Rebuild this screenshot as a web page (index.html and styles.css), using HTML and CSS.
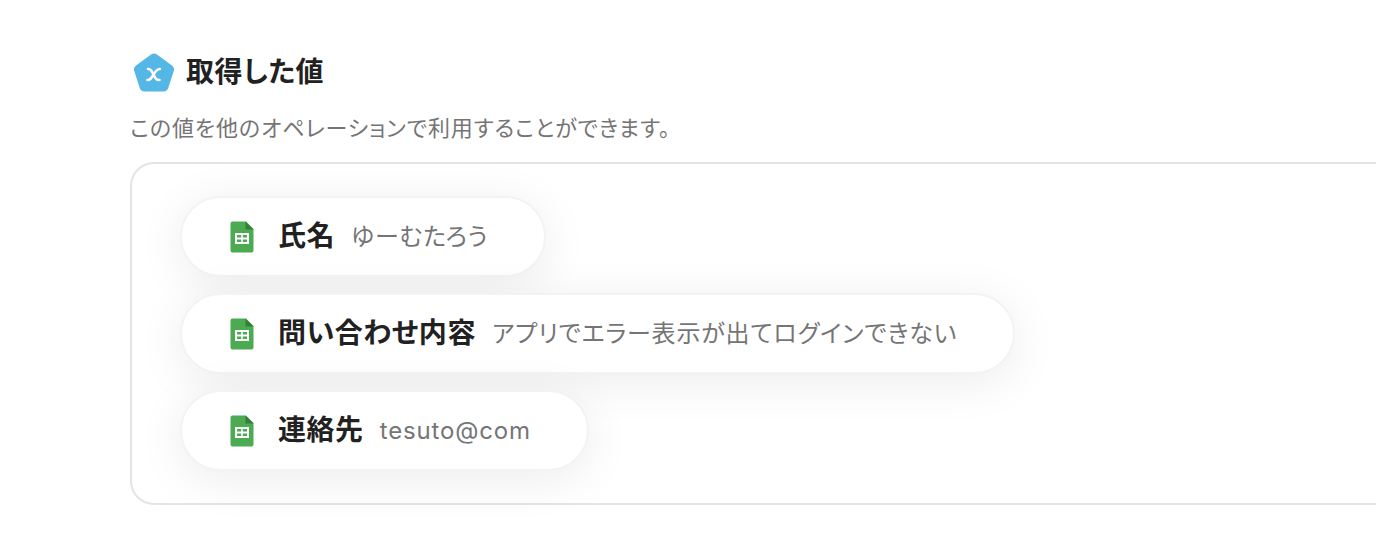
FILE: index.html
```html
<!DOCTYPE html>
<html lang="ja">
<head>
<meta charset="utf-8">
<title>取得した値</title>
<link rel="stylesheet" href="styles.css">
</head>
<body>
<svg class="defs" aria-hidden="true">
<symbol id="sheet" viewBox="0 0 24 32">
<path fill="#4caa53" d="M2 .5H16L23.500 8V29.500a2 2 0 0 1-2 2H2.500a2 2 0 0 1-2-2V2.500a2 2 0 0 1 2-2z"/>
<path fill="#357f3b" d="M15.500.5 23.500 8.500H15.500z"/>
<path fill="#fff" fill-rule="evenodd" d="M5 12h14v11H5zM7 14v2.600h4.200V14zM12.800 14v2.600H17V14zM7 18.400V21h4.200v-2.600zM12.800 18.400V21H17v-2.600z"/>
</symbol>
</svg>
<main class="page">
<header class="heading">
<svg class="logo" viewBox="0 0 40 40" aria-hidden="true">
<path fill="#54b7e6" stroke="#54b7e6" stroke-width="10" stroke-linejoin="round" d="M20 6.500 35 17.500 29.500 34.500H10.500L5 17.500z"/>
<path fill="none" stroke="#fff" stroke-width="2.600" stroke-linecap="round" d="M14 17c2.800 0 3.600 1.600 5.500 5.500s3 5.800 6 5.500M25.800 17c-2.800 0-4.200 2-6.300 5.500s-3 5.500-6 5.500"/>
</svg>
<h1 class="title">取得した値</h1>
</header>
<p class="description">この値を他のオペレーションで利用することができます。</p>
<ul class="values">
<li class="value"><svg class="icon" aria-hidden="true"><use href="#sheet"/></svg><span class="name">氏名</span><span class="content">ゆーむたろう</span></li>
<li class="value"><svg class="icon" aria-hidden="true"><use href="#sheet"/></svg><span class="name">問い合わせ内容</span><span class="content">アプリでエラー表示が出てログインできない</span></li>
<li class="value"><svg class="icon" aria-hidden="true"><use href="#sheet"/></svg><span class="name">連絡先</span><span class="content">tesuto@com</span></li>
</ul>
</main>
</body>
</html>
```

FILE: styles.css
```css
* { box-sizing: border-box; }
body { margin: 0; background: #fff; color: #212121; font-family: Inter, "Noto Sans CJK JP", sans-serif; font-feature-settings: "palt"; }
.defs { display: none; }
.page { padding: 52px 0 48px 130px; }
.heading { display: flex; align-items: center; gap: 12px; height: 40px; padding-left: 4px; }
.logo { width: 40px; height: 40px; }
.title { margin: 0; font-size: 28px; line-height: 40px; font-weight: 600; letter-spacing: .02em; }
.description { margin: 20px 0 18px; font-size: 22px; line-height: 32px; color: #757575; letter-spacing: .04em; }
.values { display: flex; flex-direction: column; align-items: flex-start; gap: 16px; margin: 0; padding: 32px 48px; list-style: none; border: 2px solid #e4e4e4; border-right: 0; border-radius: 24px 0 0 24px; }
.value { display: flex; align-items: center; padding: 22px 56px 22px 48px; line-height: 33px; background: #fff; border: 2px solid #f3f3f3; border-radius: 41px; box-shadow: 0 8px 48px rgba(0,0,0,.08); }
.icon { width: 24px; height: 32px; margin-right: 24px; }
.name { margin-right: 16px; font-size: 28px; font-weight: 600; letter-spacing: .02em; }
.content { font-size: 24px; color: #757575; letter-spacing: .035em; }
```
